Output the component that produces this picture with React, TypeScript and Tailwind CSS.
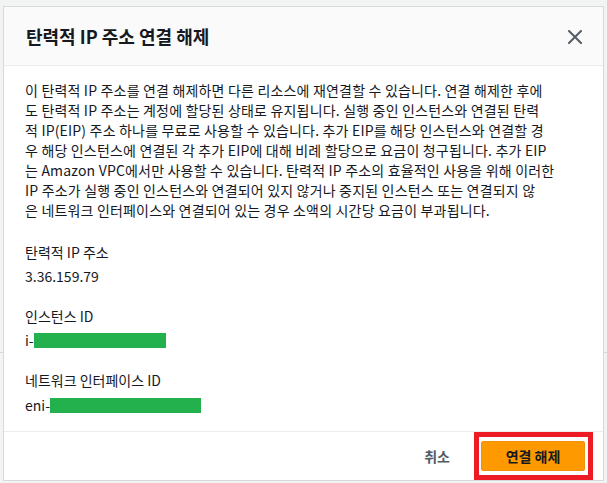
import React from "react";

const lines = [
  "이 탄력적 IP 주소를 연결 해제하면 다른 리소스에 재연결할 수 있습니다. 연결 해제한 후에",
  "도 탄력적 IP 주소는 계정에 할당된 상태로 유지됩니다. 실행 중인 인스턴스와 연결된 탄력",
  "적 IP(EIP) 주소 하나를 무료로 사용할 수 있습니다. 추가 EIP를 해당 인스턴스와 연결할 경",
  "우 해당 인스턴스에 연결된 각 추가 EIP에 대해 비례 할당으로 요금이 청구됩니다. 추가 EIP",
  "는 Amazon VPC에서만 사용할 수 있습니다. 탄력적 IP 주소의 효율적인 사용을 위해 이러한",
  "IP 주소가 실행 중인 인스턴스와 연결되어 있지 않거나 중지된 인스턴스 또는 연결되지 않",
  "은 네트워크 인터페이스와 연결되어 있는 경우 소액의 시간당 요금이 부과됩니다.",
];

export default function App() {
  return (
    <div
      className="relative w-[607px] h-[483px] overflow-hidden bg-[#f2f3f3] pt-[6px] pl-[3px] text-[#16191f]"
      style={{ fontFamily: '"Noto Sans CJK KR", "Noto Sans", sans-serif' }}
    >
      <div className="absolute left-0 right-0 top-[352px] h-px bg-[#d5dbdb]" />
      <div className="relative flex h-[475px] w-[601px] flex-col border border-[#d5dbdb] bg-white">
        <div className="flex h-[59px] shrink-0 items-center justify-between border-b border-[#eaeded] bg-[#fafafa] pl-[22px] pr-[21px]">
          <div className="text-[18px] font-bold leading-[24px]">탄력적 IP 주소 연결 해제</div>
          <svg width="14" height="14" viewBox="0 0 14 14" className="mt-[1px]">
            <path d="M1 1 L13 13 M13 1 L1 13" stroke="#545b64" strokeWidth="2" strokeLinecap="round" fill="none" />
          </svg>
        </div>
        <div className="flex-1 px-[21px] pt-[14px] text-[14px] leading-[20px]">
          <div className="tracking-[0.18px]">
            {lines.map((l, i) => (
              <div key={i} className="whitespace-nowrap">
                {l}
              </div>
            ))}
          </div>
          <div className="mt-[22px] flex flex-col gap-[20px]">
            <div>
              <div>탄력적 IP 주소</div>
              <div className="mt-[4px]">3.36.159.79</div>
            </div>
            <div>
              <div>인스턴스 ID</div>
              <div className="mt-[4px] flex items-center">
                <span>i-</span>
                <span className="inline-block h-[15px] w-[132px] bg-[#22b14c]" />
              </div>
            </div>
            <div>
              <div>네트워크 인터페이스 ID</div>
              <div className="mt-[5px] flex items-center">
                <span>eni-</span>
                <span className="inline-block h-[15px] w-[151px] bg-[#22b14c]" />
              </div>
            </div>
          </div>
        </div>
        <div className="flex h-[49px] shrink-0 items-center justify-end border-t border-[#eaeded] pr-[18px]">
          <span className="mr-[31px] text-[14px] font-bold text-[#545b64]">취소</span>
          <button className="flex h-[30px] w-[104px] items-center justify-center rounded-[2px] border border-[#f0930a] bg-[#ff9900] text-[14px] font-bold text-[#16191f]">
            연결 해제
          </button>
        </div>
      </div>
      <div className="absolute left-[474px] top-[432px] h-[48px] w-[119px] border-[5px] border-[#ed1c24]" />
    </div>
  );
}
